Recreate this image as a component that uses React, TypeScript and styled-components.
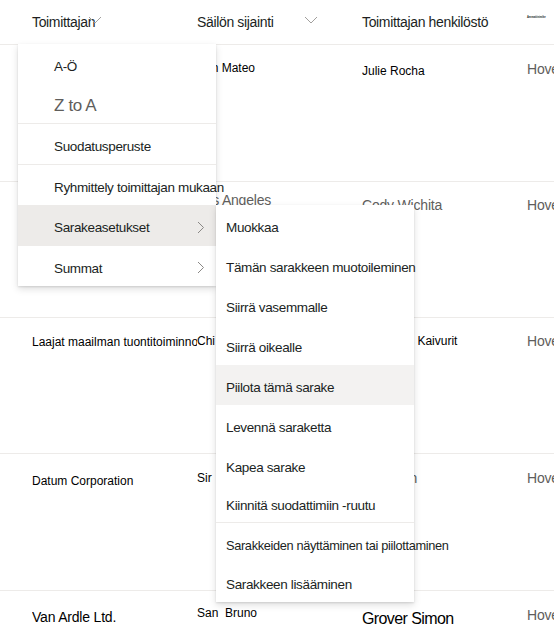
import React, { FC } from 'react'
import styled, { createGlobalStyle } from 'styled-components'

const GlobalStyle = createGlobalStyle`
  html, body {
    margin: 0;
    padding: 0;
    background: #ffffff;
    overflow: hidden;
  }
  body {
    font-family: 'Liberation Sans', Arial, sans-serif;
    color: #201f1e;
  }
`

type Tone = 'dark' | 'grey'

type CellData = {
  text: string
  size?: number
  tone?: Tone
  top: number
}

type RowData = {
  height: number
  cells: CellData[]
}

const rows: RowData[] = [
  {
    height: 137,
    cells: [
      { text: 'Adventure Works', top: 16 },
      { text: 'San Mateo', top: 16 },
      { text: 'Julie Rocha', top: 19 },
      { text: 'Hovedkontor', size: 14, tone: 'grey', top: 16 },
    ],
  },
  {
    height: 136,
    cells: [
      { text: 'Contoso Ltd.', top: 16 },
      { text: 'Los Angeles', size: 14, tone: 'grey', top: 10 },
      { text: 'Cody Wichita', size: 14, tone: 'grey', top: 15 },
      { text: 'Hovedkontor', size: 14, tone: 'grey', top: 15 },
    ],
  },
  {
    height: 136,
    cells: [
      { text: 'Laajat maailman tuontitoiminnot', top: 17 },
      { text: 'Chi', top: 16 },
      { text: 'Johannes Kaivurit', top: 16 },
      { text: 'Hovedkontor', size: 14, tone: 'grey', top: 15 },
    ],
  },
  {
    height: 137,
    cells: [
      { text: 'Datum Corporation', top: 20 },
      { text: 'Sir', top: 17 },
      { text: 'Ari Smith', size: 14, tone: 'grey', top: 16 },
      { text: 'Hovedkontor', size: 14, tone: 'grey', top: 16 },
    ],
  },
  {
    height: 136,
    cells: [
      { text: 'Van Ardle Ltd.', size: 14, top: 18 },
      { text: 'San\u00a0\u00a0Bruno', top: 15 },
      { text: 'Grover Simon', size: 16, top: 18 },
      { text: 'Hovedkontor', size: 14, tone: 'grey', top: 16 },
    ],
  },
]

type MenuItem = {
  label: string
  size?: number
  tone?: Tone
  height?: number
  active?: 'strong' | 'soft'
  submenu?: boolean
  dividerBefore?: boolean
}

const mainItems: MenuItem[] = [
  { label: 'A-Ö' },
  { label: 'Z to A', size: 17, tone: 'grey', height: 39 },
  { label: 'Suodatusperuste', dividerBefore: true },
  { label: 'Ryhmittely toimittajan mukaan', dividerBefore: true },
  { label: 'Sarakeasetukset', active: 'strong', submenu: true, height: 41 },
  { label: 'Summat', submenu: true },
]

const columnItems: MenuItem[] = [
  { label: 'Muokkaa' },
  { label: 'Tämän sarakkeen muotoileminen' },
  { label: 'Siirrä vasemmalle' },
  { label: 'Siirrä oikealle' },
  { label: 'Piilota tämä sarake', active: 'soft' },
  { label: 'Levennä saraketta' },
  { label: 'Kapea sarake' },
  { label: 'Kiinnitä suodattimiin -ruutu', height: 37 },
  { label: 'Sarakkeiden näyttäminen tai piilottaminen', size: 12.8, dividerBefore: true },
  { label: 'Sarakkeen lisääminen', height: 39 },
]

const ChevronDown: FC = () => (
  <svg width="14" height="8" viewBox="0 0 14 8">
    <path d="M1 1l6 6 6-6" fill="none" stroke="#a19f9d" strokeWidth="1" />
  </svg>
)

const ChevronRight: FC = () => (
  <svg width="8" height="13" viewBox="0 0 8 13">
    <path d="M1 1l5.5 5.5L1 12" fill="none" stroke="#8a8886" strokeWidth="1" />
  </svg>
)

const Menu: FC<{ items: MenuItem[]; inset: number }> = ({ items, inset }) => (
  <>
    {items.map((item) => (
      <React.Fragment key={item.label}>
        {item.dividerBefore && <Divider />}
        <MenuRow $active={item.active} $inset={inset} $height={item.height ?? 40}>
          <MenuLabel $size={item.size ?? 13.5} $tone={item.tone ?? 'dark'}>
            {item.label}
          </MenuLabel>
          {item.submenu && (
            <SubArrow>
              <ChevronRight />
            </SubArrow>
          )}
        </MenuRow>
      </React.Fragment>
    ))}
  </>
)

export default function App() {
  return (
    <Page>
      <GlobalStyle />
      <Table>
        <HeaderRow>
          <HeaderCell>
            Toimittajan
            <HeaderArrow $left={56}>
              <ChevronDown />
            </HeaderArrow>
          </HeaderCell>
          <HeaderCell>
            Säilön sijainti
            <HeaderArrow $left={107}>
              <ChevronDown />
            </HeaderArrow>
          </HeaderCell>
          <HeaderCell>Toimittajan henkilöstö</HeaderCell>
          <TinyHeader>Ammattinimike</TinyHeader>
        </HeaderRow>

        {rows.map((row, r) => (
          <BodyRow key={r} $height={row.height}>
            {row.cells.map((cell, c) => (
              <Cell
                key={c}
                $size={cell.size ?? 12}
                $tone={cell.tone ?? 'dark'}
                $top={cell.top}
              >
                {cell.text}
              </Cell>
            ))}
          </BodyRow>
        ))}
      </Table>

      <MainMenu>
        <Menu items={mainItems} inset={36} />
      </MainMenu>

      <ColumnMenu>
        <Menu items={columnItems} inset={10} />
      </ColumnMenu>
    </Page>
  )
}

const menuShadow =
  '0 3.2px 7.2px rgba(0, 0, 0, 0.132), 0 0.6px 1.8px rgba(0, 0, 0, 0.108)'

const Page = styled.div`
  position: relative;
  width: 554px;
  height: 631px;
  overflow: hidden;
  background: #ffffff;
`

const Table = styled.div`
  display: flex;
  flex-direction: column;
`

const HeaderRow = styled.div`
  display: grid;
  grid-template-columns: 165px 165px 165px 1fr;
  align-items: center;
  height: 44px;
  padding-left: 32px;
  border-bottom: 1px solid #edebe9;
`

const HeaderCell = styled.div`
  position: relative;
  font-size: 14px;
  letter-spacing: -0.35px;
  color: #201f1e;
  white-space: nowrap;
`

const HeaderArrow = styled.span<{ $left: number }>`
  position: absolute;
  left: ${({ $left }) => $left}px;
  top: 2px;
  display: flex;
`

const TinyHeader = styled.div`
  align-self: start;
  margin-top: 16px;
  font-size: 2.6px;
  font-weight: bold;
  color: #201f1e;
  white-space: nowrap;
`

const BodyRow = styled.div<{ $height: number }>`
  display: grid;
  grid-template-columns: 165px 165px 165px 1fr;
  align-items: start;
  height: ${({ $height }) => $height}px;
  box-sizing: border-box;
  padding-left: 32px;
  border-bottom: 1px solid #edebe9;
`

const Cell = styled.div<{ $size: number; $tone: Tone; $top: number }>`
  padding-top: ${({ $top }) => $top}px;
  font-size: ${({ $size }) => $size}px;
  line-height: 1.2;
  letter-spacing: ${({ $size }) => ($size >= 16 ? -0.6 : $size >= 14 ? -0.2 : 0)}px;
  color: ${({ $tone }) => ($tone === 'grey' ? '#605e5c' : '#000000')};
  white-space: nowrap;
  overflow: hidden;
`

const MainMenu = styled.div`
  position: absolute;
  left: 18px;
  top: 44px;
  width: 198px;
  background: #ffffff;
  box-shadow: ${menuShadow};
  z-index: 2;
`

const ColumnMenu = styled.div`
  position: absolute;
  left: 216px;
  top: 205px;
  width: 198px;
  background: #ffffff;
  box-shadow: ${menuShadow};
  z-index: 3;
`

const Divider = styled.div`
  height: 1px;
  background: #edebe9;
`

const MenuRow = styled.div<{ $active?: 'strong' | 'soft'; $inset: number; $height: number }>`
  position: relative;
  display: flex;
  align-items: center;
  height: ${({ $height }) => $height}px;
  box-sizing: border-box;
  padding: 4px 0 0 ${({ $inset }) => $inset}px;
  background: ${({ $active }) =>
    $active === 'strong' ? '#edebe9' : $active === 'soft' ? '#f3f2f1' : 'transparent'};
`

const MenuLabel = styled.span<{ $size: number; $tone: Tone }>`
  font-size: ${({ $size }) => $size}px;
  letter-spacing: -0.35px;
  color: ${({ $tone }) => ($tone === 'grey' ? '#605e5c' : '#201f1e')};
  white-space: nowrap;
`

const SubArrow = styled.span`
  position: absolute;
  right: 11px;
  top: 50%;
  margin-top: -5px;
  display: flex;
`
